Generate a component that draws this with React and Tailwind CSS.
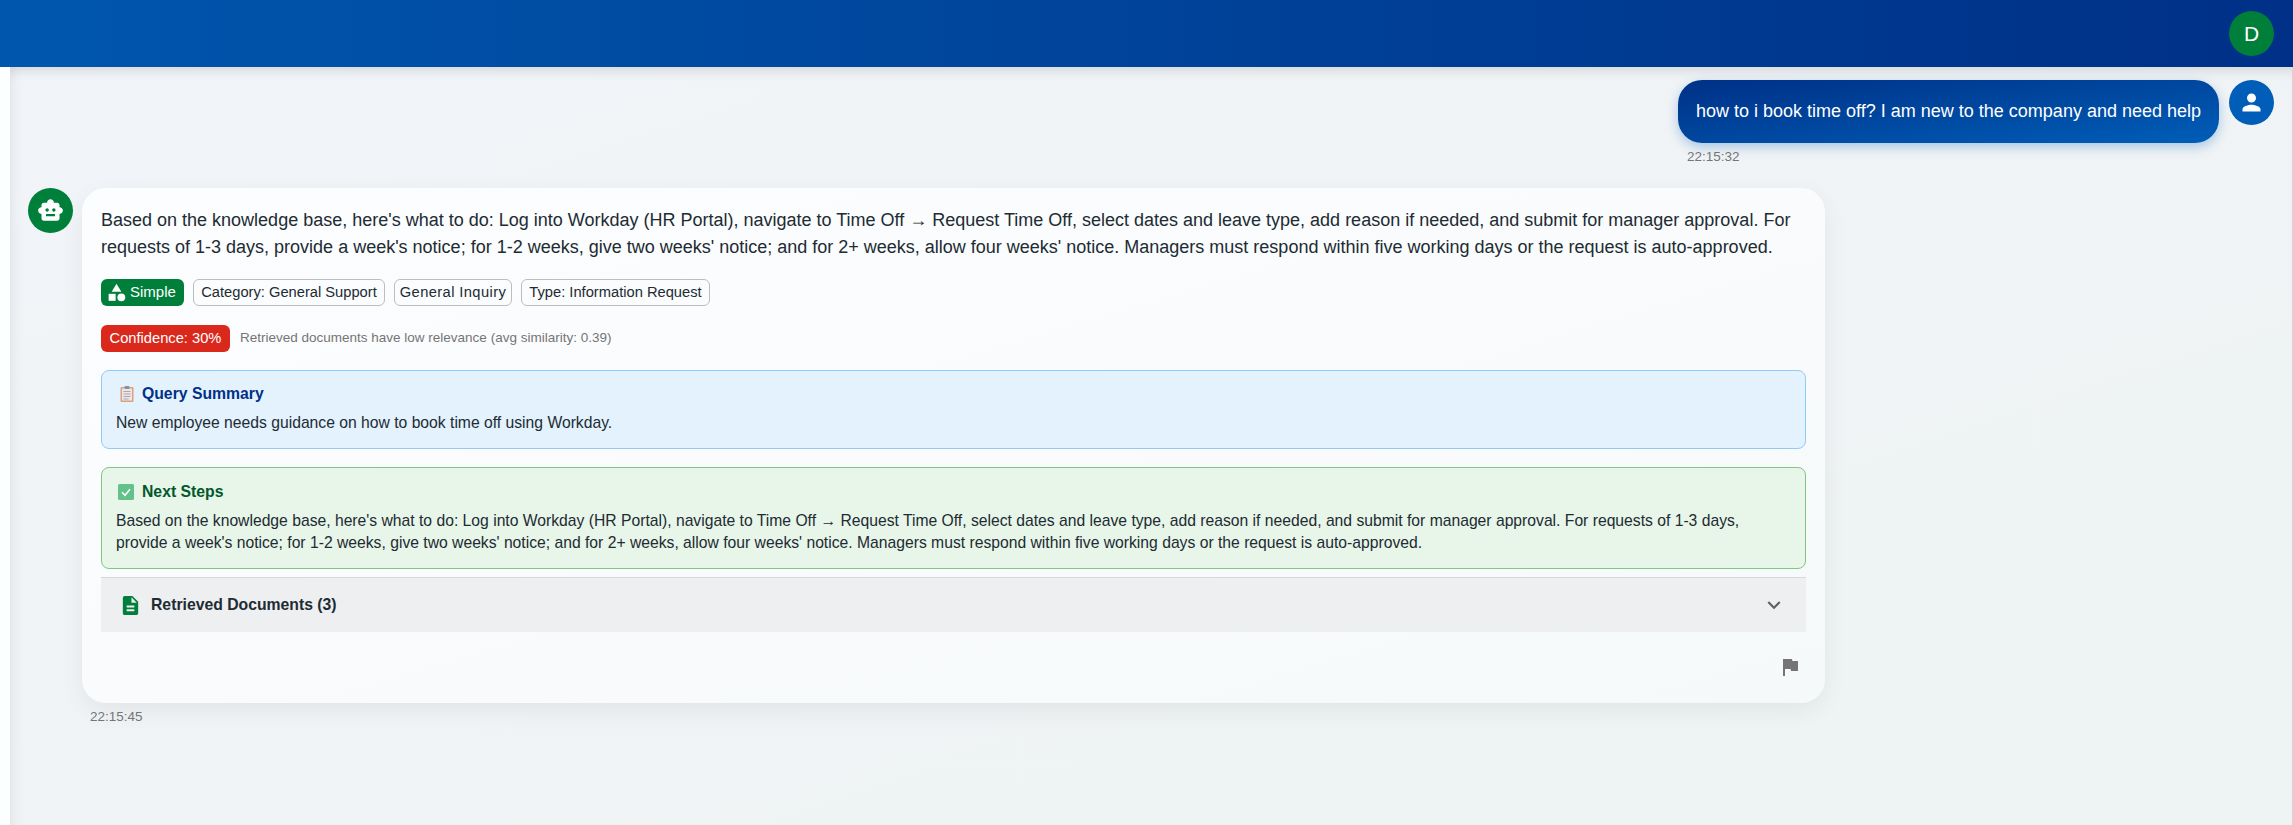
const answer =
  "Based on the knowledge base, here's what to do: Log into Workday (HR Portal), navigate to Time Off → Request Time Off, select dates and leave type, add reason if needed, and submit for manager approval. For requests of 1-3 days, provide a week's notice; for 1-2 weeks, give two weeks' notice; and for 2+ weeks, allow four weeks' notice. Managers must respond within five working days or the request is auto-approved.";

function Icon({ className, children }) {
  return (
    <svg viewBox="0 0 24 24" fill="currentColor" className={className}>
      {children}
    </svg>
  );
}

function Clipboard() {
  return (
    <svg viewBox="0 0 14 16" className="w-[14px] h-[16px] shrink-0">
      <rect x="0.5" y="1" width="13" height="15" rx="1" fill="#d9a183" />
      <rect x="2" y="2.5" width="10" height="12" fill="#f1e6df" />
      <rect x="4.5" y="0" width="5" height="3" rx="1" fill="#8d8f9e" />
      <path d="M3.5 5.5h7M3.5 8h7M3.5 10.5h7M3.5 13h5" stroke="#a4a6c4" strokeWidth="1" />
    </svg>
  );
}

function CheckBox() {
  return (
    <svg viewBox="0 0 16 16" className="w-[16px] h-[16px] shrink-0">
      <rect width="16" height="16" rx="1.5" fill="#63c28a" />
      <path d="M4 8.2l3 3 5-6" fill="none" stroke="#fff" strokeWidth="1.6" />
    </svg>
  );
}

function Chip({ className = "", children }) {
  return (
    <span className={`h-[27px] flex items-center justify-center border border-[#bdbdbd] rounded-[6px] text-[14.7px] text-[#212b32] ${className}`}>
      {children}
    </span>
  );
}

export default function App() {
  return (
    <div className="h-[825px] w-full overflow-hidden flex flex-col font-['Liberation_Sans',Arial,sans-serif] bg-[#fdfeff]">
      {/* top bar */}
      <header className="h-[67px] shrink-0 flex items-center justify-end pr-[19px] bg-gradient-to-r from-[#0056ad] to-[#003087] z-10">
        <div className="w-[45px] h-[45px] rounded-full bg-[#007f3b] text-white text-[21px] flex items-center justify-center">
          D
        </div>
      </header>

      <div className="flex-1 flex min-h-0">
        <div className="w-[10px] shrink-0 bg-[#fdfeff]" />

        <main className="flex-1 flex flex-col pt-[13px] pr-[18px] pl-[18px] border-r border-[#d3d7d7] bg-gradient-to-br from-[#f1f4f8] to-[#eef3f3] shadow-[inset_0_12px_14px_-10px_rgba(0,0,0,0.14),inset_12px_0_14px_-10px_rgba(0,0,0,0.07)]">
          {/* user message */}
          <div className="flex justify-end gap-[10px]">
            <div className="flex flex-col">
              <div className="h-[63px] px-[18px] flex items-center rounded-[24px] bg-gradient-to-br from-[#003087] to-[#005eb8] text-white text-[18px] shadow-[0_4px_12px_rgba(0,94,184,0.3)]">
                how to i book time off? I am new to the company and need help
              </div>
              <span className="mt-[6px] ml-[9px] text-[13.5px] leading-[16px] text-[#757575]">22:15:32</span>
            </div>
            <div className="w-[45px] h-[45px] shrink-0 rounded-full bg-[#005eb8] text-white flex items-center justify-center">
              <Icon className="w-[27px] h-[27px]">
                <path d="M12 12c2.21 0 4-1.79 4-4s-1.79-4-4-4-4 1.79-4 4 1.79 4 4 4zm0 2c-2.67 0-8 1.34-8 4v2h16v-2c0-2.66-5.33-4-8-4z" />
              </Icon>
            </div>
          </div>

          {/* bot message */}
          <div className="flex gap-[9px] mt-[23px]">
            <div className="w-[45px] h-[45px] shrink-0 rounded-full bg-[#007f3b] text-white flex items-center justify-center">
              <Icon className="w-[27px] h-[27px]">
                <path d="M20 9V7c0-1.1-.9-2-2-2h-3c0-1.66-1.34-3-3-3S9 3.34 9 5H6c-1.1 0-2 .9-2 2v2c-1.66 0-3 1.34-3 3s1.34 3 3 3v4c0 1.1.9 2 2 2h12c1.1 0 2-.9 2-2v-4c1.66 0 3-1.34 3-3s-1.34-3-3-3zM7.5 11.5c0-.83.67-1.5 1.5-1.5s1.5.67 1.5 1.5S9.83 13 9 13s-1.5-.67-1.5-1.5zM16 17H8v-2h8v2zm-1-4c-.83 0-1.5-.67-1.5-1.5S14.17 10 15 10s1.5.67 1.5 1.5S15.83 13 15 13z" />
              </Icon>
            </div>

            <div className="w-[1743px] flex flex-col">
              <div className="h-[515px] px-[19px] pt-[19px] rounded-[24px] bg-gradient-to-br from-[#fcfdff] to-[#f6f9fa] shadow-[0_8px_24px_rgba(0,0,0,0.06)]">
                <p className="text-[18px] leading-[27px] text-[#212b32]">{answer}</p>

                <div className="flex gap-[9px] mt-[18px]">
                  <span className="h-[27px] w-[83px] pl-[5px] flex items-center gap-[3px] rounded-[6px] bg-[#007f3b] text-white text-[15px]">
                    <Icon className="w-[21px] h-[21px]">
                      <path d="m12 2-5.5 9h11z" />
                      <circle cx="17.5" cy="17.5" r="4.5" />
                      <path d="M3 13.5h8v8H3z" />
                    </Icon>
                    Simple
                  </span>
                  <Chip className="w-[192px]">Category: General Support</Chip>
                  <Chip className="w-[118px] tracking-[0.4px]">General Inquiry</Chip>
                  <Chip className="w-[189px]">Type: Information Request</Chip>
                </div>

                <div className="flex items-center gap-[10px] mt-[19px]">
                  <span className="h-[27px] w-[129px] flex items-center justify-center rounded-[6px] bg-[#da291c] text-white text-[14.7px]">
                    Confidence: 30%
                  </span>
                  <span className="text-[13.5px] text-[#757575]">
                    Retrieved documents have low relevance (avg similarity: 0.39)
                  </span>
                </div>

                <section className="mt-[18px] h-[79px] px-[14px] pt-[13px] rounded-[8px] border border-[#90caf9] bg-[#e3f2fd]">
                  <div className="flex items-center gap-[8px] pl-[4px] h-[20px]">
                    <Clipboard />
                    <span className="text-[15.75px] font-bold text-[#003087]">Query Summary</span>
                  </div>
                  <p className="mt-[8px] text-[15.7px] leading-[22px] text-[#212b32]">
                    New employee needs guidance on how to book time off using Workday.
                  </p>
                </section>

                <section className="mt-[18px] h-[102px] px-[14px] pt-[14px] rounded-[8px] border border-[#81c784] bg-[#e8f5e9]">
                  <div className="flex items-center gap-[8px] pl-[2px] h-[20px]">
                    <CheckBox />
                    <span className="text-[15.75px] font-bold text-[#00592c]">Next Steps</span>
                  </div>
                  <p className="mt-[8px] text-[15.7px] leading-[22px] text-[#212b32]">{answer}</p>
                </section>

                <div className="mt-[8px] h-[55px] flex items-center justify-between pl-[18px] pr-[19px] border-t border-[#d8d8d8] bg-[#eeeff1]">
                  <div className="flex items-center gap-[9px]">
                    <Icon className="w-[23px] h-[23px] text-[#007f3b]">
                      <path d="M14 2H6c-1.1 0-1.99.9-1.99 2L4 20c0 1.1.89 2 1.99 2H18c1.1 0 2-.9 2-2V8l-6-6zm2 16H8v-2h8v2zm0-4H8v-2h8v2zm-3-5V3.5L18.5 9H13z" />
                    </Icon>
                    <span className="text-[15.75px] font-bold text-[#212b32]">Retrieved Documents (3)</span>
                  </div>
                  <Icon className="w-[26px] h-[26px] text-[#616161]">
                    <path d="M16.59 8.59 12 13.17 7.41 8.59 6 10l6 6 6-6z" />
                  </Icon>
                </div>

                <div className="flex justify-end pt-[23px] pr-[4px]">
                  <Icon className="w-[24px] h-[24px] text-[#757575]">
                    <path d="M14.4 6 14 4H5v17h2v-7h5.6l.4 2h7V6z" />
                  </Icon>
                </div>
              </div>
              <span className="mt-[6px] ml-[8px] text-[13.5px] leading-[16px] text-[#757575]">22:15:45</span>
            </div>
          </div>
        </main>
      </div>
    </div>
  );
}
